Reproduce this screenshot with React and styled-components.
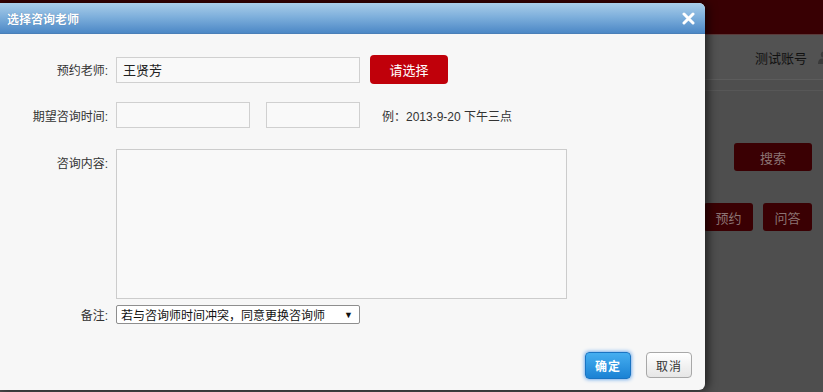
import styled, { createGlobalStyle } from 'styled-components';

const GlobalStyle = createGlobalStyle`
  html, body {
    margin: 0;
    padding: 0;
    background: #4e4e4e;
    font-family: "Liberation Sans", "Noto Sans CJK SC", sans-serif;
    overflow: hidden;
  }
`;

const Page = styled.div`
  position: relative;
  width: 823px;
  height: 392px;
  background: #4e4e4e;
  overflow: hidden;
`;

const TopBar = styled.div`
  height: 34px;
  background: #380003;
`;

const UserBar = styled.div`
  height: 44px;
  display: flex;
  justify-content: flex-end;
  align-items: center;
  gap: 10px;
  background: #525252;
  border-top: 1px solid #5a3a3a;
  border-bottom: 1px solid #5c5c5c;
  font-size: 13px;
  color: #111;
  margin-right: -8px;
`;

const SubBar = styled.div`
  height: 10px;
  border-bottom: 1px solid #575757;
`;

const SideCol = styled.div`
  display: flex;
  flex-direction: column;
  align-items: flex-end;
  padding: 52px 11px 0 0;
  gap: 32px;
`;

const ButtonRow = styled.div`
  display: flex;
  gap: 10px;
`;

const DarkButton = styled.div`
  width: ${(p) => p.$w || 49}px;
  height: 28px;
  border-radius: 3px;
  background: #3a0003;
  color: #8c7474;
  font-size: 13px;
  display: flex;
  align-items: center;
  justify-content: center;
`;

const Dialog = styled.div`
  position: absolute;
  left: -2px;
  top: 3px;
  width: 707px;
  height: 387px;
  background: #f7f7f7;
  border-radius: 0 6px 6px 0;
  box-shadow: 3px 0 10px rgba(0, 0, 0, 0.6);
  display: flex;
  flex-direction: column;
  overflow: hidden;
`;

const Header = styled.div`
  height: 30px;
  flex: none;
  display: flex;
  align-items: center;
  justify-content: space-between;
  padding: 0 10px 0 9px;
  background: linear-gradient(#a9cde9, #7fb0dc 45%, #4c88c6);
  border-bottom: 1px solid #4a7fb8;
  color: #fff;
  font-size: 12px;
  font-weight: bold;
  text-shadow: 0 0 1px rgba(0, 40, 90, 0.4);
`;

const Body = styled.div`
  flex: 1;
  display: flex;
  flex-direction: column;
  padding-top: 21px;
`;

const Row = styled.div`
  display: flex;
  align-items: ${(p) => (p.$top ? 'flex-start' : 'center')};
  margin-bottom: ${(p) => p.$mb || 0}px;
`;

const Label = styled.div`
  width: 110px;
  flex: none;
  margin-right: 8px;
  font-size: 12px;
  color: #333;
  text-align: right;
  padding-top: ${(p) => p.$pt || 0}px;
`;

const Input = styled.div`
  box-sizing: border-box;
  width: ${(p) => p.$w}px;
  height: 26px;
  border: 1px solid #d0d0d0;
  background: #f9f9f9;
  font-size: 13px;
  color: #222;
  display: flex;
  align-items: center;
  padding-left: 6px;
  margin-right: ${(p) => p.$mr || 0}px;
`;

const RedButton = styled.div`
  width: 78px;
  height: 29px;
  border-radius: 4px;
  background: #c0000a;
  color: #fff;
  font-size: 13px;
  display: flex;
  align-items: center;
  justify-content: center;
  margin-left: 10px;
`;

const Hint = styled.div`
  font-size: 12px;
  color: #333;
  margin-left: 22px;
`;

const TextArea = styled.div`
  box-sizing: border-box;
  width: 451px;
  height: 150px;
  border: 1px solid #cccccc;
  background: #f9f9f9;
`;

const Select = styled.div`
  box-sizing: border-box;
  width: 244px;
  height: 19px;
  border: 1px solid #8e8e8e;
  border-radius: 2px;
  background: #fff;
  font-size: 12px;
  color: #111;
  display: flex;
  align-items: center;
  justify-content: space-between;
  padding: 0 6px 0 4px;
`;

const Arrow = styled.span`
  font-size: 9px;
  color: #111;
`;

const Footer = styled.div`
  display: flex;
  justify-content: flex-end;
  gap: 15px;
  padding: 0 13px 11px 0;
`;

const OkButton = styled.div`
  width: 46px;
  height: 27px;
  box-sizing: border-box;
  border-radius: 4px;
  background: linear-gradient(#45aef0, #1b82d4);
  border: 1px solid #1a74c2;
  box-shadow: 0 0 4px #3b8ee8;
  color: #fff;
  font-size: 12px;
  font-weight: bold;
  letter-spacing: 1px;
  display: flex;
  align-items: center;
  justify-content: center;
`;

const CancelButton = styled.div`
  width: 46px;
  height: 26px;
  box-sizing: border-box;
  border-radius: 4px;
  background: linear-gradient(#ffffff, #e6e6e6);
  border: 1px solid #a8a8a8;
  color: #333;
  font-size: 12px;
  letter-spacing: 1px;
  display: flex;
  align-items: center;
  justify-content: center;
`;

const UserIcon = () => (
  <svg width="14" height="14" viewBox="0 0 14 14">
    <circle cx="7" cy="4.5" r="3.2" fill="#3a3a3a" />
    <path d="M1 14 C1 9 4 8.5 7 8.5 C10 8.5 13 9 13 14 Z" fill="#3a3a3a" />
  </svg>
);

const CloseIcon = () => (
  <svg width="13" height="13" viewBox="0 0 13 13">
    <path d="M2 2 L11 11 M11 2 L2 11" stroke="#fff" strokeWidth="3" strokeLinecap="round" />
  </svg>
);

export default function App() {
  return (
    <Page>
      <GlobalStyle />
      <TopBar />
      <UserBar>
        <span>测试账号</span>
        <UserIcon />
      </UserBar>
      <SubBar />
      <SideCol>
        <DarkButton $w={78}>搜索</DarkButton>
        <ButtonRow>
          <DarkButton>预约</DarkButton>
          <DarkButton>问答</DarkButton>
        </ButtonRow>
      </SideCol>

      <Dialog>
        <Header>
          <span>选择咨询老师</span>
          <CloseIcon />
        </Header>
        <Body>
          <Row $mb={18}>
            <Label>预约老师:</Label>
            <Input $w={244}>王贤芳</Input>
            <RedButton>请选择</RedButton>
          </Row>

          <Row $mb={21}>
            <Label>期望咨询时间:</Label>
            <Input $w={134} $mr={16} />
            <Input $w={94} />
            <Hint>例：2013-9-20 下午三点</Hint>
          </Row>

          <Row $top $mb={6}>
            <Label $pt={5}>咨询内容:</Label>
            <TextArea />
          </Row>

          <Row>
            <Label>备注:</Label>
            <Select>
              <span>若与咨询师时间冲突，同意更换咨询师</span>
              <Arrow>▼</Arrow>
            </Select>
          </Row>
        </Body>
        <Footer>
          <OkButton>确定</OkButton>
          <CancelButton>取消</CancelButton>
        </Footer>
      </Dialog>
    </Page>
  );
}
